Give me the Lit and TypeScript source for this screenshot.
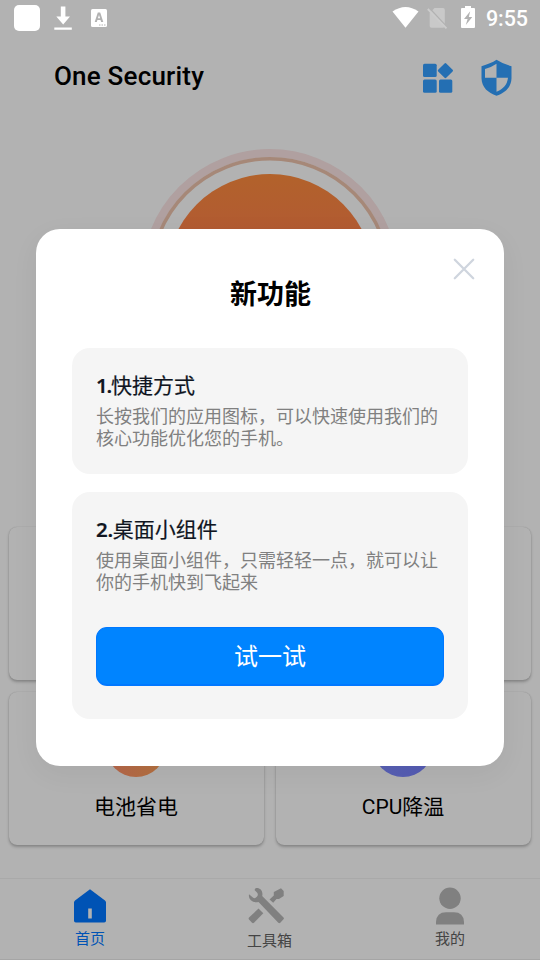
import { LitElement, html, css, svg } from "lit";
import { customElement } from "lit/decorators.js";

const homeIcon = svg`<svg width="34" height="36" viewBox="0 0 34 36"><path fill="#0053b5" fill-rule="evenodd" d="M17 1.200 32 12.500q1 .8 1 2v18.300q0 1.700-1.800 1.700H2.800Q1 34.500 1 32.800V14.500q0-1.200 1-2ZM15.200 20.500v10h3.600v-10Z"/></svg>`;
const toolsIcon = svg`<svg width="38" height="38" viewBox="0 0 38 38"><g fill="#808080"><path d="M8.500 1.200C12.500.2 16.500 3.500 15.200 9L36.500 30.500q.8.900 0 1.800l-3.200 3.500q-1 .9-2 0L11.500 15C6 16.500 1 12.500 2 7.200L6.200 10.800Q8 12 9.800 9.800 11.800 7.500 10 5.500L7.500 3Z"/><path d="m11.500 21.500 4.800 4.700-9.300 9.500q-1 .9-2 0L2 32.600q-.8-1 0-2Z"/><path d="m22.500 12.500 4.300-4V5L34 1.200l2.700 2.700V9L32 12h-2.500l-3.300 3.700Z"/></g></svg>`;
const userIcon = svg`<svg width="30" height="38" viewBox="0 0 30 38"><g fill="#808080"><circle cx="15" cy="11.300" r="10.700"/><path d="M1 37.600V35Q1.500 25.300 11 25.300h8q9.500 0 10 9.700v2.600Z"/></g></svg>`;

@customElement("app-root")
export class AppRoot extends LitElement {
  static styles = css`
    * { box-sizing: border-box; }
    :host {
      display: block; position: relative; width: 540px; height: 960px; overflow: hidden;
      background: #b2b2b2; color: #000;
      font-family: Roboto, "Noto Sans CJK SC", sans-serif;
    }
    svg { display: block; flex: none; }
    .page { display: flex; flex-direction: column; height: 960px; }
    .status { height: 36px; padding: 0 12px 0 14px; display: flex; align-items: center; color: #fff; }
    .app { width: 26px; height: 26px; border-radius: 5px; background: #fff; }
    .download { margin-left: 13px; }
    .keyboard { margin-left: 17px; }
    .wifi { margin: 0 0 2px auto; }
    .sim { margin-left: 8px; }
    .battery { margin: 0 0 2px 12px; }
    .clock { width: 42px; margin-left: 10px; font-size: 21.500px; line-height: 36px; font-weight: 500; white-space: nowrap; letter-spacing: -.1px; padding-top: 2px; }
    .bar { height: 84px; padding: 0 28px 0 54px; display: flex; align-items: center; }
    .brand { flex: 1; margin-top: -4px; font-size: 26px; line-height: 32px; font-weight: 500; letter-spacing: .2px; }
    .shield { margin-left: 26px; }
    .gauge { height: 407px; padding-top: 28px; display: flex; justify-content: center; }
    .cards { display: grid; grid-template-columns: 255px 255px; grid-auto-rows: 153px; gap: 12px; padding-left: 9px; }
    .card {
      border-radius: 8px; background: #b2b2b2;
      box-shadow: 0 2px 3px rgba(0,0,0,.24), 0 0 1px rgba(0,0,0,.22);
      display: flex; flex-direction: column; align-items: center; padding: 25px 1px 0 0;
      font-size: 21px; line-height: 30px;
    }
    .orb { width: 60px; height: 60px; border-radius: 50%; margin-bottom: 15px; }
    .orange { background: linear-gradient(90deg, #b5654c, #b2713d); }
    .violet { background: linear-gradient(90deg, #5961b3, #535ab3); }
    .nav {
      height: 82px; margin-top: auto; border-top: 1px solid #a9a9a9; border-bottom: 1px solid #a5a5a5;
      display: grid; grid-template-columns: repeat(3, 180px);
    }
    .tab { display: flex; flex-direction: column; align-items: center; font-size: 15px; line-height: 22px; color: #444; }
    .tab.home { color: #0053b5; padding-top: 9px; }
    .tab.home svg { margin-bottom: 4px; }
    .tab.tools { padding: 8px 1px 0 0; }
    .tab.tools svg { margin: 0 7px 5px 0; }
    .tab.me { padding-top: 8px; }
    .tab.me svg { margin-bottom: 3px; }
    .dialog {
      position: absolute; left: 36px; top: 229px; width: 468px; height: 537px;
      border-radius: 24px; background: #fff; padding: 0 36px;
      box-shadow: 0 8px 28px rgba(0,0,0,.05);
    }
    .close { position: absolute; right: 29px; top: 29px; }
    h1 { margin: 0; padding: 46px 0 0 1px; height: 119px; text-align: center; font-size: 27px; line-height: 40px; font-weight: 700; }
    .feature { background: #f5f5f5; border-radius: 18px; padding: 21px 24px 0; height: 126px; }
    .widget { margin-top: 18px; height: 227px; }
    h2 { margin: 0; font-size: 21px; line-height: 30px; font-weight: 400; color: #10151f; -webkit-text-stroke: .2px #10151f; font-family: "Noto Sans CJK SC", sans-serif; white-space: nowrap; }
    .num { font-family: "Noto Sans", sans-serif; font-weight: 600; font-size: 20.500px; }
    .one { letter-spacing: -1.200px; }
    .two { letter-spacing: -.3px; }
    p { margin: 4px 0 0; font-size: 18px; line-height: 22px; color: #808080; font-family: "Noto Sans CJK SC", sans-serif; white-space: nowrap; }
    button {
      display: block; width: 348px; height: 59px; margin-top: 35px; padding: 0 0 3px; border: 1px solid #0078ff;
      border-bottom-width: 2px; border-radius: 11px; background: #0084ff; color: #fff;
      font: 400 24px "Noto Sans CJK SC", sans-serif;
    }
  `;

  render() {
    return html`
      <div class="page">
        <div class="status">
          <div class="app"></div>
          <svg class="download" width="20" height="26" viewBox="0 0 20 26"><path fill="#fff" d="M7.800 1.500h4.600v10h4.600l-6.800 8-6.900-8h4.500ZM1.300 22.500h17.500v2.300H1.300Z"/></svg>
          <svg class="keyboard" width="18" height="20" viewBox="0 0 18 20"><rect x="1" y="1" width="16" height="18" rx="1.500" fill="#fff"/><path fill="#b2b2b2" d="M7.800 4.500h2.400L13.300 14h-2.200l-.6-2H7.400l-.6 2H4.700ZM9 7l-1.100 3.300h2.200Z"/><path stroke="#b2b2b2" stroke-dasharray="1.500 1" d="M9 17h7"/></svg>
          <svg class="wifi" width="27" height="23" viewBox="0 0 27 23"><path fill="#fff" d="M.5 5.500Q13.500-3.600 26.500 5.500L13.500 21.800Z"/></svg>
          <svg class="sim" width="21" height="22" viewBox="0 0 21 22"><path fill="#c9c9c9" d="M7.500 1H16q1.800 0 1.800 1.800V19q0 1.800-1.800 1.800H4.500q-1.800 0-1.800-1.800V6Z"/><path stroke="#b2b2b2" stroke-width="1.500" d="m2 .8 18.500 19.700"/><path stroke="#ccc" stroke-width="1.800" d="m.8 2 18.700 19.300"/></svg>
          <svg class="battery" width="16" height="24" viewBox="0 0 16 24"><path fill="#fff" d="M5 1h6v2h3q1 0 1 1v18q0 1-1 1H2q-1 0-1-1V4q0-1 1-1h3Z"/><path fill="#b2b2b2" d="M10.200 6.300 4 14h3.600l-1.800 6L12.300 12H8.800Z"/></svg>
          <div class="clock">9:55</div>
        </div>
        <div class="bar">
          <div class="brand">One Security</div>
          <svg width="32" height="32" viewBox="0 0 32 32"><g fill="#246fb3"><rect x="1" y="1.800" width="13.700" height="13.300" rx="1.500"/><rect x="1" y="17.500" width="13.700" height="13.300" rx="1.500"/><rect x="17" y="17.500" width="13.300" height="13.300" rx="1.500"/><rect x="17.700" y="2.900" width="11.400" height="11.400" rx="1.200" transform="rotate(45 23.400 8.600)"/></g></svg>
          <svg class="shield" width="32" height="38" viewBox="0 0 32 38"><path fill="#246fb3" d="M16.500.8Q22.500 4.800 31.500 7.200v12C31.200 28.500 25 33.700 16.500 36.800 8 33.700 1.800 28.500 1.500 19.200v-12Q10.500 4.800 16.500.8Z"/><path fill="#b2b2b2" d="M16.500 4.700V18.700H5V10Q11.500 8.200 16.500 4.700ZM16.500 18.700H28c-.8 7.300-5 11.300-11.500 14Z"/></svg>
        </div>
        <div class="gauge">
          <svg width="260" height="260" viewBox="0 0 260 260"><defs><linearGradient id="heat" x1="0" y1="0" x2="0" y2="1"><stop stop-color="#b2622b"/><stop offset=".3" stop-color="#b25a33"/><stop offset="1" stop-color="#b24b3c"/></linearGradient></defs><g fill="none"><circle cx="130" cy="129.800" r="124.700" stroke="#b0a0a0" stroke-width="8"/><circle cx="130" cy="129.800" r="119.100" stroke="#a68878" stroke-width="3.600"/></g><circle cx="130" cy="129.800" r="103.800" fill="url(#heat)"/></svg>
        </div>
        <div class="cards">
          <div class="card"></div>
          <div class="card"></div>
          <div class="card"><div class="orb orange"></div>电池省电</div>
          <div class="card"><div class="orb violet"></div>CPU降温</div>
        </div>
        <div class="nav">
          <div class="tab home">${homeIcon}首页</div>
          <div class="tab tools">${toolsIcon}工具箱</div>
          <div class="tab me">${userIcon}我的</div>
        </div>
      </div>
      <div class="dialog">
        <svg class="close" width="22" height="22" viewBox="0 0 22 22"><path stroke="#cfd5de" stroke-width="2.300" stroke-linecap="round" d="m1.800 1.800 18.400 18.400m0-18.400L1.800 20.200"/></svg>
        <h1>新功能</h1>
        <div class="feature">
          <h2><span class="num one">1.</span>快捷方式</h2>
          <p>长按我们的应用图标，可以快速使用我们的<br>核心功能优化您的手机。</p>
        </div>
        <div class="feature widget">
          <h2><span class="num two">2.</span>桌面小组件</h2>
          <p>使用桌面小组件，只需轻轻一点，就可以让<br>你的手机快到飞起来</p>
          <button>试一试</button>
        </div>
      </div>
    `;
  }
}
